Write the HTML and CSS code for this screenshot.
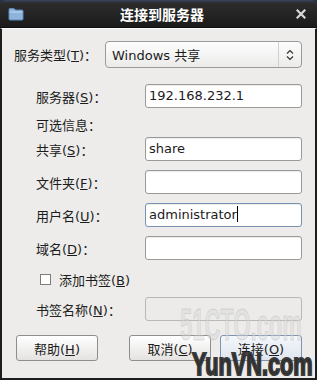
FILE: index.html
```html
<!DOCTYPE html>
<html lang="zh-CN">
<head>
  <meta charset="UTF-8" />
  <title>连接到服务器</title>
  <link rel="stylesheet" href="styles.css">
</head>
<body>

<div class="window">
  <!-- Title bar -->
  <div class="titlebar">
    <svg class="folder" width="16" height="14" viewBox="0 0 16 14">
      <path d="M1 2.5 Q1 1.5 2 1.5 H6 L7.5 3 H14 Q15 3 15 4 V12 Q15 13 14 13 H2 Q1 13 1 12 Z" fill="#8fb4dc" stroke="#5f88b8" stroke-width="1"/>
      <path d="M1.5 5 H14.5" stroke="#c3d8ee" stroke-width="1"/>
    </svg>
    <div class="title">连接到服务器</div>
    <svg class="close" width="10" height="10" viewBox="0 0 10 10">
      <path d="M1.5 1.5 L8.5 8.5 M8.5 1.5 L1.5 8.5" stroke="#d8d8d8" stroke-width="2.2" stroke-linecap="square"/>
    </svg>
  </div>

  <!-- Dialog body -->
  <div class="dialog">
    <div class="type-row">
      <label class="type-label">服务类型(<u>T</u>)：</label>
      <div class="combo">
        <span class="combo-text">Windows 共享</span>
        <span class="combo-arrow">
          <svg width="8" height="12" viewBox="0 0 8 12">
            <path d="M1 4.5 L4 1.5 L7 4.5 M1 7.5 L4 10.5 L7 7.5" fill="none" stroke="#333" stroke-width="1.2"/>
          </svg>
        </span>
      </div>
    </div>

    <div class="form">
      <div class="row">
        <label>服务器(<u>S</u>)：</label>
        <div class="field">192.168.232.1</div>
      </div>
      <div class="info">可选信息：</div>
      <div class="row">
        <label>共享(<u>S</u>)：</label>
        <div class="field">share</div>
      </div>
      <div class="row">
        <label>文件夹(<u>F</u>)：</label>
        <div class="field"></div>
      </div>
      <div class="row">
        <label>用户名(<u>U</u>)：</label>
        <div class="field focus">administrator<span class="caret"></span></div>
      </div>
      <div class="row">
        <label>域名(<u>D</u>)：</label>
        <div class="field"></div>
      </div>
      <div class="check-row">
        <span class="checkbox"></span>
        <span>添加书签(<u>B</u>)</span>
      </div>
      <div class="row">
        <label class="dim">书签名称(<u>N</u>)：</label>
        <div class="field disabled"></div>
      </div>
    </div>

    <div class="buttons">
      <button class="btn">帮助(<u>H</u>)</button>
      <div class="right-buttons">
        <button class="btn">取消(<u>C</u>)</button>
        <button class="btn default">连接(<u>O</u>)</button>
      </div>
    </div>
  </div>

  <!-- watermarks -->
  <div class="mark-51">51CTO.com</div>
  <div class="mark-yun">YunVN.com</div>
</div>

</body>
</html>
```

FILE: styles.css
```css
* {
  margin: 0;
  padding: 0;
  box-sizing: border-box;
}

body {
  background: #27314a;
  font-family: "DejaVu Sans", "Noto Sans CJK SC", sans-serif;
  font-size: 13px;
  color: #1c1c1c;
  width: 317px;
  height: 380px;
  overflow: hidden;
}

.window {
  position: relative;
  width: 317px;
  height: 380px;
  overflow: hidden;
}

.titlebar {
  height: 28px;
  display: flex;
  align-items: center;
  padding: 0 8px;
  border-radius: 6px 6px 0 0;
  background: linear-gradient(to bottom, #3a4462 0px, #2c2c2c 3px, #242424 14px, #1b1b1b 27px);
  border-bottom: 1px solid #0e0e0e;
}

.folder {
  flex: none;
  margin-top: 1px;
}

.title {
  flex: 1;
  text-align: center;
  color: #fff;
  font-weight: bold;
  font-size: 14px;
  margin-left: 4px;
}

.close {
  flex: none;
  margin-right: 3px;
}

.dialog {
  height: 352px;
  background: #edecea;
  border-left: 2px solid #1d1d1d;
  border-right: 2px solid #1d1d1d;
  border-bottom: 2px solid #1d1d1d;
  border-top: 1px solid #fafafa;
  padding: 12px 13px 0 12px;
}

.type-row {
  display: flex;
  align-items: center;
  height: 27px;
}

.type-label {
  width: 91px;
}

.combo {
  flex: 1;
  height: 27px;
  display: flex;
  align-items: center;
  border: 1px solid #9a9a9a;
  border-radius: 4px;
  background: linear-gradient(to bottom, #fdfdfd, #ebebea);
}

.combo-text {
  flex: 1;
  padding-left: 6px;
}

.combo-arrow {
  width: 23px;
  height: 100%;
  border-left: 1px solid #d0d0d0;
  display: flex;
  align-items: center;
  justify-content: center;
}

.form {
  padding-left: 22px;
  margin-top: 16px;
}

.row {
  display: flex;
  align-items: center;
  height: 24px;
  margin-bottom: 9px;
}

.row label {
  width: 109px;
}

.field {
  flex: 1;
  height: 24px;
  border: 1px solid #9a9a9a;
  border-radius: 3px;
  background: #fff;
  padding: 0 3px;
  line-height: 22px;
  box-shadow: inset 0 1px 1px rgba(0,0,0,0.08);
}

.field.focus {
  border-color: #7892b4;
}

.caret {
  display: inline-block;
  width: 1px;
  height: 16px;
  background: #000;
  vertical-align: -3px;
}

.field.disabled {
  background: #ecebe9;
  border-color: #b8b8b8;
  box-shadow: none;
}

.dim {
  color: #222;
}

.info {
  height: 20px;
  line-height: 18px;
  margin-bottom: 0;
}

.check-row {
  display: flex;
  align-items: center;
  gap: 8px;
  height: 20px;
  margin-top: 8px;
  margin-bottom: 8px;
  padding-left: 4px;
}

.checkbox {
  width: 11px;
  height: 11px;
  border: 1px solid #7c7c7c;
  background: #fff;
}

.buttons {
  display: flex;
  justify-content: space-between;
  margin-top: 14px;
  padding-left: 2px;
}

.right-buttons {
  display: flex;
  gap: 9px;
}

.btn {
  width: 82px;
  height: 26px;
  font-family: inherit;
  font-size: 13px;
  color: #1c1c1c;
  border: 1px solid #8e8e8e;
  border-radius: 3px;
  background: linear-gradient(to bottom, #ffffff, #e4e3e1);
}

.btn.default {
  border-color: #7d93b0;
  background: linear-gradient(to bottom, #f4f7fb, #dfe5ee);
}

.mark-51 {
  position: absolute;
  left: 180px;
  top: 300px;
  font-family: "Liberation Sans", sans-serif;
  font-weight: bold;
  font-size: 44px;
  line-height: 50px;
  transform: scaleX(0.5);
  transform-origin: left top;
  white-space: nowrap;
  color: rgba(215, 215, 215, 0.45);
  -webkit-text-stroke: 1px rgba(170, 170, 170, 0.35);
  pointer-events: none;
}

.mark-yun {
  position: absolute;
  left: 192px;
  top: 349px;
  font-family: "Liberation Sans", sans-serif;
  font-weight: bold;
  font-size: 31px;
  line-height: 31px;
  transform: scaleX(0.7);
  transform-origin: left top;
  white-space: nowrap;
  color: #2e2e2e;
  -webkit-text-stroke: 2px #3a3a3a;
  pointer-events: none;
}
```
